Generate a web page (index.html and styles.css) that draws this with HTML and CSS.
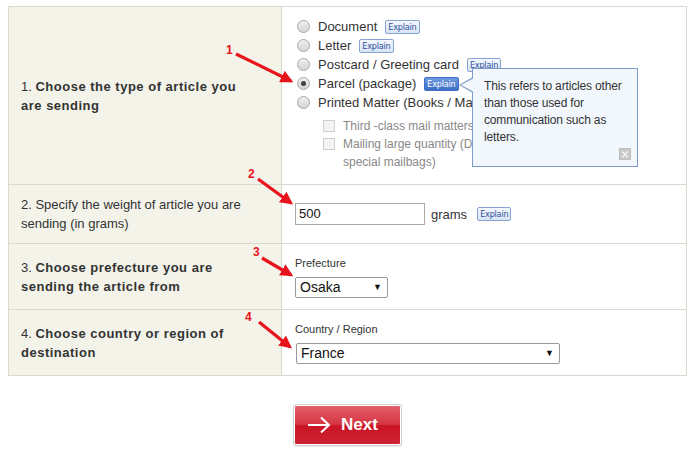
FILE: index.html
```html
<!DOCTYPE html>
<html>
<head>
<meta charset="utf-8">
<link rel="stylesheet" href="styles.css">
</head>
<body>
<div class="page">
  <table class="form">
    <tr class="r1">
      <th>1. <b>Choose the type of article you are sending</b></th>
      <td class="opts-cell">
        <ul class="opts">
          <li><span class="radio"></span>Document <span class="explain">Explain</span></li>
          <li><span class="radio"></span>Letter <span class="explain">Explain</span></li>
          <li><span class="radio"></span>Postcard / Greeting card <span class="explain">Explain</span></li>
          <li><span class="radio on"></span>Parcel (package) <span class="explain active">Explain</span></li>
          <li><span class="radio"></span>Printed Matter (Books / Magazines)</li>
        </ul>
        <ul class="subs">
          <li><span class="check"></span><span>Third -class mail matters (Periodicals)</span></li>
          <li><span class="check"></span><span>Mailing large quantity (Direct mail) using<br>special mailbags)</span></li>
        </ul>
        <div class="tip">
          This refers to articles other than those used for communication such as letters.
          <span class="tip-close"></span>
        </div>
      </td>
    </tr>
    <tr class="r2">
      <th>2. Specify the weight of article you are sending (in grams)</th>
      <td>
        <div class="weight">
          <span class="input">500</span>
          <span class="unit">grams</span>
          <span class="explain">Explain</span>
        </div>
      </td>
    </tr>
    <tr class="r3">
      <th>3. <b>Choose prefecture you are sending the article from</b></th>
      <td>
        <div class="field-label">Prefecture</div>
        <div class="select pref"><span>Osaka</span><span class="caret">▼</span></div>
      </td>
    </tr>
    <tr class="r4">
      <th>4. <b>Choose country or region of destination</b></th>
      <td>
        <div class="field-label">Country / Region</div>
        <div class="select country"><span>France</span><span class="caret">▼</span></div>
      </td>
    </tr>
  </table>
  <div class="actions">
    <div class="next">
      <svg width="24" height="18" viewBox="0 0 24 18"><path d="M1 9H22M14 1.5L22 9L14 16.5" fill="none" stroke="#fff" stroke-width="2"/></svg>
      <span>Next</span>
    </div>
  </div>
  <svg class="marks" width="695" height="454" viewBox="0 0 695 454">
    <defs>
      <marker id="ah" markerWidth="4" markerHeight="4" refX="3.2" refY="2" orient="auto" markerUnits="strokeWidth">
        <path d="M0 0L4 2L0 4Z" fill="#e8141c"/>
      </marker>
    </defs>
    <g stroke="#e8141c" stroke-width="3.2" marker-end="url(#ah)">
      <line x1="236" y1="54" x2="291" y2="81"/>
      <line x1="258" y1="179" x2="291" y2="203"/>
      <line x1="262" y1="258" x2="291" y2="275"/>
      <line x1="259" y1="322" x2="290" y2="347"/>
    </g>
    <g class="digits" fill="#e8141c">
      <text x="226" y="54">1</text>
      <text x="248" y="178">2</text>
      <text x="253" y="256">3</text>
      <text x="245" y="321">4</text>
    </g>
  </svg>
</div>
</body>
</html>
```
FILE: styles.css
```css
html, body {
  margin: 0;
  padding: 0;
  background: #fff;
}
.page {
  position: relative;
  width: 695px;
  height: 454px;
  padding: 6px 8px 0;
  box-sizing: border-box;
  font-family: "Liberation Sans", Arial, sans-serif;
  color: #333;
}
.form {
  border-collapse: collapse;
  width: 679px;
}
.form th, .form td {
  border: 1px solid #d9d9d0;
  vertical-align: middle;
  text-align: left;
}
.form th {
  width: 234px;
  background: #f4f3ea;
  font-weight: normal;
  font-size: 13px;
  line-height: 19px;
  padding: 0 26px 0 12px;
}
.form th b {
  font-weight: bold;
  letter-spacing: 0.5px;
}
.form td {
  padding: 0 0 0 13px;
}
.r1 { height: 178px; }
.r2 { height: 59px; }
.r3 { height: 66px; }
.r4 { height: 66px; }
.opts-cell {
  position: relative;
  vertical-align: top !important;
  padding-top: 10px !important;
}
.opts, .subs {
  list-style: none;
  margin: 0;
  padding: 0;
}
.opts li {
  display: flex;
  align-items: center;
  height: 19px;
  font-size: 13px;
  padding-left: 2px;
  white-space: nowrap;
}
.radio {
  width: 11px;
  height: 11px;
  border: 1px solid #a9a9a9;
  border-radius: 50%;
  background: linear-gradient(#f0f0f0, #d4d4d4);
  margin-right: 8px;
  position: relative;
  flex: none;
}
.radio.on::after {
  content: "";
  position: absolute;
  left: 3px;
  top: 3px;
  width: 5px;
  height: 5px;
  border-radius: 50%;
  background: #444;
}
.explain {
  display: inline-block;
  margin-left: 8px;
  font-size: 9px;
  line-height: 12px;
  height: 12px;
  padding: 0 2px;
  border: 1px solid #87a3d3;
  border-radius: 2px;
  background: linear-gradient(#f5f8fd, #d9e4f4);
  color: #2c51a0;
  font-family: "DejaVu Sans Condensed", "Liberation Sans Narrow", sans-serif;
  letter-spacing: -0.2px;
}
.explain.active {
  background: linear-gradient(#6f9ae0, #3e6fc6);
  border-color: #3e6fc6;
  color: #fff;
}
.subs {
  margin-top: 5px;
  padding-left: 28px;
}
.subs li {
  display: flex;
  align-items: flex-start;
  font-size: 12px;
  line-height: 18px;
  color: #888;
  white-space: nowrap;
}
.check {
  width: 10px;
  height: 10px;
  border: 1px solid #cfcfcf;
  background: #f3f3f3;
  margin: 3px 8px 0 0;
  flex: none;
}
.tip {
  position: absolute;
  left: 190px;
  top: 61px;
  width: 147px;
  height: 80px;
  padding: 9px 6px 8px 11px;
  background: #f2f7fd;
  border: 1px solid #7c9bc8;
  font-size: 12px;
  line-height: 17px;
  letter-spacing: -0.15px;
  color: #333;
}
.tip::before, .tip::after {
  content: "";
  position: absolute;
  top: 8px;
  width: 0;
  height: 0;
  border-style: solid;
  border-color: transparent;
}
.tip::before {
  left: -14px;
  border-width: 8px 14px 8px 0;
  border-right-color: #7c9bc8;
}
.tip::after {
  left: -12px;
  top: 9px;
  border-width: 7px 13px 7px 0;
  border-right-color: #f2f7fd;
}
.tip-close {
  position: absolute;
  right: 6px;
  bottom: 6px;
  width: 12px;
  height: 12px;
  background: #c9c9c9;
  border: 1px solid #bdbdbd;
  box-sizing: border-box;
}
.tip-close::before, .tip-close::after {
  content: "";
  position: absolute;
  left: 1px;
  top: 4.5px;
  width: 8px;
  height: 1px;
  background: #fff;
  transform: rotate(45deg);
}
.tip-close::after {
  transform: rotate(-45deg);
}
.weight {
  display: flex;
  align-items: center;
}
.input {
  display: block;
  width: 125px;
  height: 20px;
  line-height: 20px;
  border: 1px solid #aaa;
  padding-left: 3px;
  font-size: 13px;
  color: #111;
}
.unit {
  font-size: 13px;
  margin-left: 6px;
}
.weight .explain {
  margin-left: 10px;
}
.field-label {
  font-size: 11px;
  line-height: 14px;
  margin-bottom: 7px;
  color: #333;
}
.select {
  display: flex;
  align-items: center;
  justify-content: space-between;
  height: 19px;
  border: 1px solid #999;
  border-radius: 2px;
  padding: 0 5px 0 4px;
  font-size: 14px;
  color: #111;
  box-sizing: content-box;
}
.select.pref { width: 82px; }
.select.country { width: 253px; margin-left: 1px; }
.caret {
  font-size: 9px;
  color: #111;
}
.actions {
  display: flex;
  justify-content: center;
  margin-top: 29px;
}
.next {
  display: flex;
  align-items: center;
  gap: 10px;
  width: 107px;
  height: 40px;
  box-sizing: border-box;
  padding-left: 12px;
  border: 1px solid #fff;
  outline: 1px solid #cfcfcf;
  border-radius: 2px;
  background: linear-gradient(#e2606b 0%, #d63542 48%, #c91424 52%, #cf2333 100%);
  color: #fff;
  font-weight: bold;
  font-size: 17px;
  box-shadow: 0 1px 2px rgba(0,0,0,0.25);
}
.marks {
  position: absolute;
  left: 0;
  top: 0;
  pointer-events: none;
}
.digits text {
  font-family: "Liberation Sans", Arial, sans-serif;
  font-weight: bold;
  font-size: 12px;
}
```
